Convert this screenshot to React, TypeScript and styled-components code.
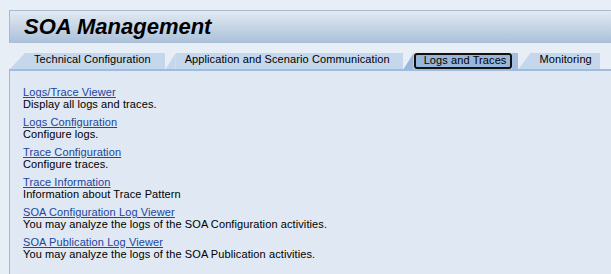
import React from "react"
import styled, { createGlobalStyle } from "styled-components"

const GlobalStyle = createGlobalStyle`
    html, body {
        margin: 0;
        padding: 0;
        background: #e8eef5;
    }
    body {
        font-family: "Liberation Sans", Arial, sans-serif;
        color: #000;
    }
`

const Page = styled.div`
    height: 274px;
    box-sizing: border-box;
    padding: 10px 0 0 9px;
    display: flex;
    flex-direction: column;
    overflow: hidden;
`

const TitleBar = styled.div`
    flex-shrink: 0;
    height: 33px;
    box-sizing: border-box;
    border-top: 1px solid #a7bbd0;
    border-left: 1px solid #a7bbd0;
    background: linear-gradient(to bottom, #e2eaf2, #aac0d8);
    display: flex;
    align-items: center;
    padding-left: 14px;
`

const Title = styled.h1`
    margin: 0;
    font-size: 22px;
    font-weight: bold;
    font-style: italic;
    color: #000;
`

const TabStrip = styled.div`
    flex-shrink: 0;
    display: flex;
    margin-top: 10px;
    padding-left: 1px;
    height: 16px;
`

const Tab = styled.div`
    display: flex;
    height: 16px;
`

const Slant = styled.div<{ $width: number; $active?: boolean }>`
    width: ${({ $width }) => $width}px;
    background: ${({ $active }) => ($active ? "#9cb8db" : "#c4d7ec")};
    clip-path: polygon(100% 0, 100% 100%, 0 100%);
`

const TabLabel = styled.div<{ $padRight: number }>`
    background: #c4d7ec;
    padding: 0 ${({ $padRight }) => $padRight}px 0 9px;
    font-size: 11px;
    line-height: 12px;
    letter-spacing: 0.1px;
    white-space: nowrap;
    margin-right: 1px;
`

const ActiveLabel = styled.div`
    background: #98b5da;
    border: 2px solid #111;
    border-radius: 3px;
    box-sizing: border-box;
    height: 16px;
    padding: 0 4px 0 8px;
    font-size: 11px;
    line-height: 11px;
    letter-spacing: 0.1px;
    white-space: nowrap;
`

const ActiveTail = styled.div`
    width: 6px;
    background: #a6bedd;
`

const Panel = styled.div`
    flex: 1 0 auto;
    border-top: 2px solid #a0bbdb;
    border-left: 1px solid #a7bbd0;
    background: #dfe8f3;
    padding: 15px 13px;
`

const Item = styled.div`
    margin-bottom: 6px;
    font-size: 11px;
    line-height: 12px;
    letter-spacing: 0.1px;
`

const ItemLink = styled.a`
    display: inline-block;
    color: #22459c;
    text-decoration: underline;
    cursor: pointer;
`

const ItemText = styled.div`
    color: #000;
`

const tabs = [
    { label: "Technical Configuration", slant: 15, pad: 14 },
    { label: "Application and Scenario Communication", slant: 10, pad: 13 },
    { label: "Logs and Traces", slant: 10, pad: 0, active: true },
    { label: "Monitoring", slant: 12, pad: 8 },
]

const items = [
    { title: "Logs/Trace Viewer", text: "Display all logs and traces." },
    { title: "Logs Configuration", text: "Configure logs." },
    { title: "Trace Configuration", text: "Configure traces." },
    { title: "Trace Information", text: "Information about Trace Pattern" },
    { title: "SOA Configuration Log Viewer", text: "You may analyze the logs of the SOA Configuration activities." },
    { title: "SOA Publication Log Viewer", text: "You may analyze the logs of the SOA Publication activities." },
]

const App: React.FC = () => {
    return (
        <>
            <GlobalStyle />
            <Page>
                <TitleBar>
                    <Title>SOA Management</Title>
                </TitleBar>
                <TabStrip>
                    {tabs.map((tab) => (
                        <Tab key={tab.label}>
                            <Slant $width={tab.slant} $active={tab.active} />
                            {tab.active ? (
                                <>
                                    <ActiveLabel>{tab.label}</ActiveLabel>
                                    <ActiveTail />
                                </>
                            ) : (
                                <TabLabel $padRight={tab.pad}>{tab.label}</TabLabel>
                            )}
                        </Tab>
                    ))}
                </TabStrip>
                <Panel>
                    {items.map((item) => (
                        <Item key={item.title}>
                            <ItemLink>{item.title}</ItemLink>
                            <ItemText>{item.text}</ItemText>
                        </Item>
                    ))}
                </Panel>
            </Page>
        </>
    )
}

export default App
